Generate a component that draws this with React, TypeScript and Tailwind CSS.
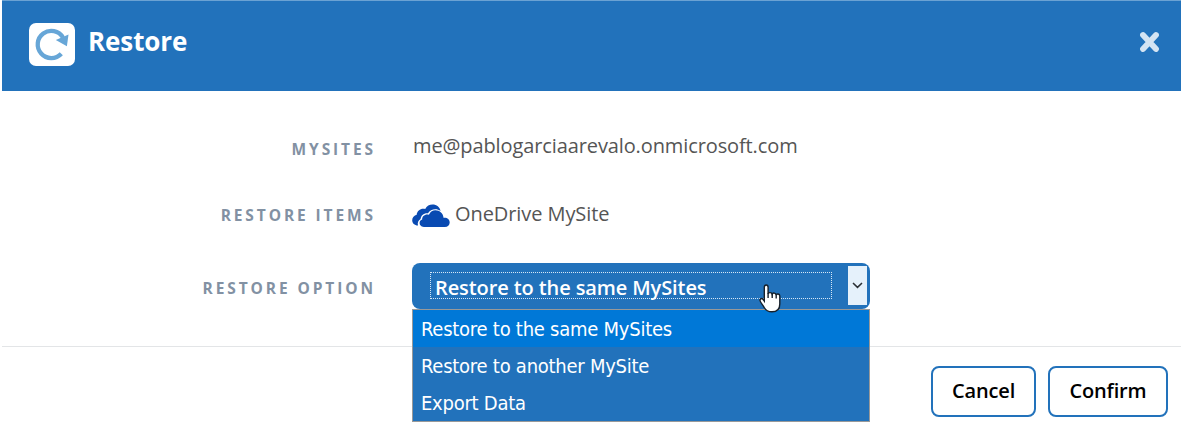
import React from "react";

const options = ["Restore to the same MySites", "Restore to another MySite", "Export Data"];

function RestoreIcon() {
  return (
    <span className="flex h-[43px] w-[46px] shrink-0 items-center justify-center rounded-[7px] bg-white">
      <svg width="46" height="43" viewBox="0 0 46 43" fill="none">
        <path d="M32.3 30.7A13.6 13.6 0 1 1 34 14.5" stroke="#67a6d7" strokeWidth="4.3" />
        <path d="M39.5 11.6L37.9 23.3L26.8 17Z" fill="#67a6d7" />
      </svg>
    </span>
  );
}

function OneDriveIcon() {
  return (
    <svg className="shrink-0" width="38" height="24" viewBox="0 0 38 24" fill="#094ab2">
      <path d="M6 21.5C2.5 21.3 0.2 19.1 0.2 16.2C0.2 13.4 2.2 11.4 4.7 10.8C4.9 6.3 9.6 3.6 13.2 5C14.7 2 17.5.6 20.5.6C24.7.6 27.8 3.3 28.5 7C24.9 4.3 18.5 4.9 16 9.2C11.7 8.8 8.8 11.6 8.6 15.1C6.2 16.5 5.3 18.8 6 21.5Z" />
      <path d="M13.2 23C9.8 23 7.6 21.3 7.6 18.9C7.6 17.2 8.5 16.2 10.2 15.6C9.8 12.3 13.2 9.6 16.9 10.7C18.3 7.6 20.8 6.3 23.4 6.3C27.8 6.3 31.3 9.5 31.5 13.8C35 13.3 37.7 15.2 37.7 18.4C37.7 21.1 35.7 23 32.8 23Z" stroke="white" strokeWidth="1" paintOrder="stroke" />
    </svg>
  );
}

function HandCursor() {
  return (
    <svg className="absolute left-[347px] top-[21px]" width="22" height="29" viewBox="0 0 22 29">
      <path
        d="M7.2 1C5.9 1 5.3 2 5.3 3.2V17.1L4 15.3C2.9 13.9.8 14.8 1 16.5C1.2 18 4 21.4 5.2 23.5C6.7 26.3 8.6 27.8 13 27.8C18.4 27.8 20.8 25 20.8 20V12C20.8 9.6 17.6 9.3 17.2 11.2C16.9 8.7 13.8 8.5 13.2 10.2C12.6 8.3 9.6 8 9.1 9.8V3.2C9.1 2 8.5 1 7.2 1Z"
        fill="white"
        stroke="#17202b"
        strokeWidth="1.4"
      />
      <path d="M9.1 9V14M13.2 9.5V14M17.2 10.5V14.5" stroke="#17202b" strokeWidth="1.4" />
    </svg>
  );
}

function Label({ children }: { children: React.ReactNode }) {
  return (
    <div className="w-[374px] shrink-0 text-right text-[15.5px] font-bold leading-6 tracking-[2.9px] text-[#8291a3]">
      {children}
    </div>
  );
}

export default function App() {
  return (
    <div className="relative flex h-[429px] w-[1181px] flex-col overflow-hidden bg-white pl-0.5 font-['Open_Sans',sans-serif]">
      <header className="flex h-[91px] shrink-0 items-start border-t border-[#6ba2d3] bg-[#2272bb] pl-[27px] pt-[22px]">
        <RestoreIcon />
        <h1 className="ml-[13px] grow text-[26px] font-bold leading-9 tracking-[-0.1px] text-white">Restore</h1>
        <button className="mr-[21px] mt-[8px]" aria-label="Close">
          <svg width="21" height="22" viewBox="0 0 21 22">
            <path d="M4 4L17 18M17 4L4 18" stroke="#d4e4f3" strokeWidth="5.8" strokeLinecap="round" />
          </svg>
        </button>
      </header>

      <main className="h-[256px] shrink-0 border-b border-[#e3e5e7]">
        <div className="flex h-[88px] items-start pt-[46px]">
          <Label>MYSITES</Label>
          <div className="-mt-[5px] ml-[37px] text-[20px] leading-7 tracking-[-0.11px] text-[#555]">me@pablogarciaarevalo.onmicrosoft.com</div>
        </div>
        <div className="flex h-[84px] items-start pt-[24px]">
          <Label>RESTORE ITEMS</Label>
          <div className="-mt-[4px] ml-[36px] flex items-center gap-[5px] text-[20px] leading-7 tracking-[-0.08px] text-[#555]">
            <span className="mt-[5px]"><OneDriveIcon /></span>
            <span>OneDrive MySite</span>
          </div>
        </div>
        <div className="flex items-start">
          <div className="pt-[13px]"><Label>RESTORE OPTION</Label></div>
          <div className="relative ml-[36px] flex h-[46px] w-[458px] items-start rounded-[8px] bg-[#2272bb] pl-[18px] pt-[9px]">
            <div className="flex h-[27px] w-[402px] items-center border border-dotted border-[#d6e7f6] pl-1 pt-[4px] text-[20px] font-semibold leading-6 tracking-[-0.1px] text-white">
              {options[0]}
            </div>
            <div className="-mt-[6px] ml-[16px] flex h-[39px] w-[19px] items-center justify-center bg-[#e5f1fb] pr-px">
              <svg width="11" height="7" viewBox="0 0 11 7" fill="none">
                <path d="M1 1L5.5 5.4L10 1" stroke="#2b3035" strokeWidth="1.5" />
              </svg>
            </div>
            <ul className="absolute left-0 top-[46px] z-10 h-[113px] w-[458px] border border-[#999] bg-[#2272bb] font-['DejaVu_Sans_Condensed','DejaVu_Sans',sans-serif] text-[20px] tracking-[-0.25px] text-white [font-stretch:condensed]">
              {options.map((option, i) => (
                <li key={option} className={`flex h-[37px] items-center pl-[8px] pt-px ${i === 0 ? "bg-[#0078d7]" : ""}`}>
                  {option}
                </li>
              ))}
            </ul>
            <div className="absolute left-0 top-0 z-20"><HandCursor /></div>
          </div>
        </div>
      </main>

      <footer className="flex justify-end gap-[12px] pr-[13px] pt-[19px] text-[20px] font-semibold tracking-[-0.15px] text-black">
        <button className="h-[51px] w-[105px] rounded-[8px] border-2 border-[#2272bb] pb-[2px]">Cancel</button>
        <button className="h-[51px] w-[120px] rounded-[8px] border-2 border-[#2272bb] pb-[2px]">Confirm</button>
      </footer>
    </div>
  );
}
